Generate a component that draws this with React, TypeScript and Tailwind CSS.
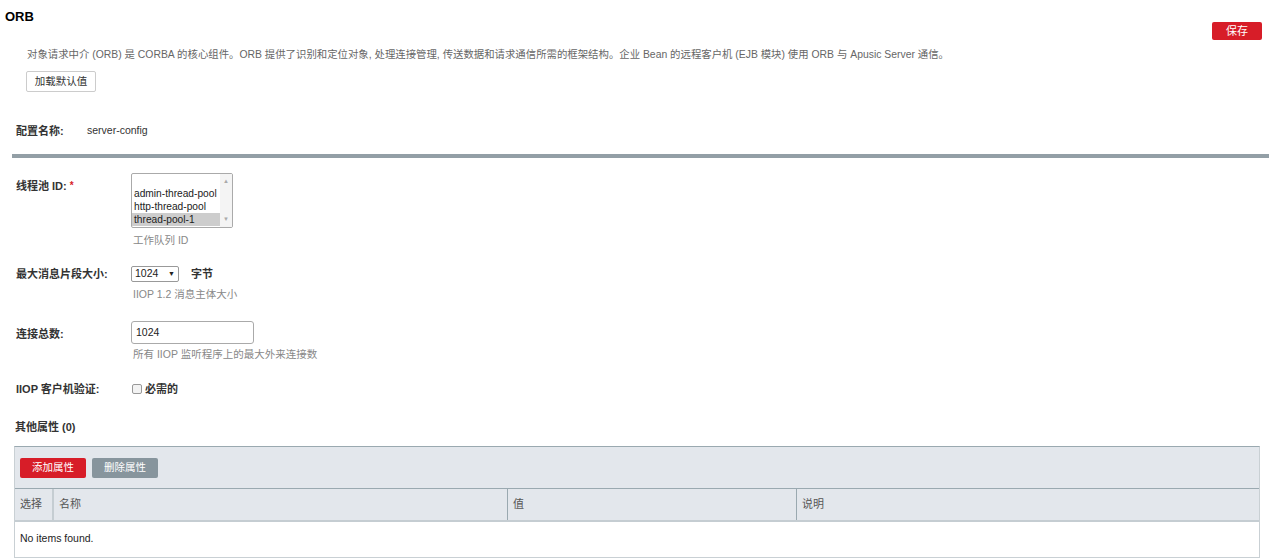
import React from "react";

const font = { fontFamily: '"Liberation Sans", Arial, "Noto Sans CJK SC", sans-serif' };

function Label({ children, className = "" }: { children: React.ReactNode; className?: string }) {
  return <div className={"w-[115px] shrink-0 font-bold text-[11px] text-[#333] leading-[14px] " + className}>{children}</div>;
}

export default function App() {
  return (
    <div className="w-[1269px] h-[560px] bg-white overflow-hidden text-[#333]" style={font}>
      <div className="flex justify-between items-start">
        <div className="pl-[5px] pt-[9px] text-[13px] font-bold text-black leading-[16px]">ORB</div>
        <button className="mt-[22px] mr-[7px] w-[50px] h-[18px] bg-[#d71d28] rounded-[2px] text-white text-[11px] leading-[18px]">保存</button>
      </div>
      <div className="pl-[27px] mt-[8px] text-[10.4px] text-[#666] leading-[14px]">
        对象请求中介 (ORB) 是 CORBA 的核心组件。ORB 提供了识别和定位对象, 处理连接管理, 传送数据和请求通信所需的框架结构。企业 Bean 的远程客户机 (EJB 模块) 使用 ORB 与 Apusic Server 通信。
      </div>
      <div className="pl-[26px] mt-[6px]">
        <button className="w-[70px] h-[21px] border border-[#ccc] rounded-[2px] bg-white text-[10.5px] text-[#333] leading-[19px]">加载默认值</button>
      </div>
      <div className="flex items-center pl-[16px] mt-[31px] text-[11px]">
        <div className="w-[71px] font-bold">配置名称:</div>
        <div className="text-[#333] text-[10.5px]">server-config</div>
      </div>
      <div className="ml-[12px] mt-[14px] h-[4px] bg-[#939fa6]" />

      <div className="flex pl-[16px] mt-[15px]">
        <Label className="mt-[6px]">
          线程池 ID: <span className="text-[#d71d28] align-top text-[10px]">*</span>
        </Label>
        <div>
          <div className="w-[102px] h-[55px] border border-[#aaa] rounded-[2px] flex overflow-hidden">
            <div className="flex-1 min-w-0 pt-[13px] text-[10.2px] leading-[13px] text-[#222] whitespace-nowrap overflow-hidden">
              <div className="pl-[2px]">admin-thread-pool</div>
              <div className="pl-[2px]">http-thread-pool</div>
              <div className="pl-[2px] bg-[#cdcdcd]">thread-pool-1</div>
            </div>
            <div className="w-[12px] shrink-0 bg-[#f4f4f4] flex flex-col justify-between items-center text-[6px] text-[#aaa] py-[3px]">
              <span>▲</span>
              <span>▼</span>
            </div>
          </div>
          <div className="mt-[5px] text-[10.5px] text-[#888] leading-[14px] pl-[2px]">工作队列 ID</div>
        </div>
      </div>

      <div className="flex pl-[16px] mt-[20px]">
        <Label>最大消息片段大小:</Label>
        <div className="mt-[-1px]">
          <div className="flex items-center">
            <div className="w-[48px] h-[16px] border border-[#999] rounded-[2px] flex items-center justify-between px-[3px] text-[10.5px] text-[#222]">
              <span>1024</span>
              <span className="text-[7px]">▼</span>
            </div>
            <span className="ml-[12px] text-[11px] font-bold text-[#333]">字节</span>
          </div>
          <div className="mt-[5px] text-[10.5px] text-[#888] leading-[14px] pl-[2px]">IIOP 1.2 消息主体大小</div>
        </div>
      </div>

      <div className="flex pl-[16px] mt-[26px]">
        <Label>连接总数:</Label>
        <div className="mt-[-6px]">
          <div className="w-[123px] h-[23px] border border-[#aaa] rounded-[3px] px-[4px] text-[10.5px] leading-[21px] text-[#222]">1024</div>
          <div className="mt-[3px] text-[10.5px] text-[#888] leading-[14px] pl-[2px]">所有 IIOP 监听程序上的最大外来连接数</div>
        </div>
      </div>

      <div className="flex items-center pl-[16px] mt-[20px]">
        <Label>IIOP 客户机验证:</Label>
        <div className="flex items-center ml-[1px]">
          <div className="w-[10px] h-[10px] border border-[#999] rounded-[2px] bg-[#f3f3f3]" />
          <span className="ml-[3px] text-[11px] font-bold">必需的</span>
        </div>
      </div>

      <div className="pl-[15px] mt-[22px] text-[11px] font-bold leading-[14px]">其他属性 (0)</div>

      <div className="ml-[14px] mr-[9px] mt-[12px] border border-[#c9d0d4] border-t-[#9aa9b0]">
        <div className="bg-[#e3e7ec] h-[42px] flex items-center gap-[6px] pl-[5px] pt-[1px] border-b border-[#9aa9b0]">
          <button className="w-[66px] h-[20px] bg-[#d71d28] rounded-[2px] text-white text-[10.5px]">添加属性</button>
          <button className="w-[66px] h-[20px] bg-[#87959d] rounded-[2px] text-white text-[10.5px]">删除属性</button>
        </div>
        <div className="bg-[#e3e7ec] h-[33px] flex text-[11px] text-[#555] border-b-2 border-[#c5cdd2]">
          <div className="w-[39px] flex items-center pl-[5px] border-r-2 border-[#c5cdd2]">选择</div>
          <div className="w-[454px] flex items-center pl-[5px] border-r border-[#9aa9b0]">名称</div>
          <div className="w-[289px] flex items-center pl-[5px] border-r border-[#9aa9b0]">值</div>
          <div className="flex-1 flex items-center pl-[5px]">说明</div>
        </div>
        <div className="h-[35px] flex items-center pl-[5px] text-[10.5px] text-[#222]">No items found.</div>
      </div>
    </div>
  );
}
